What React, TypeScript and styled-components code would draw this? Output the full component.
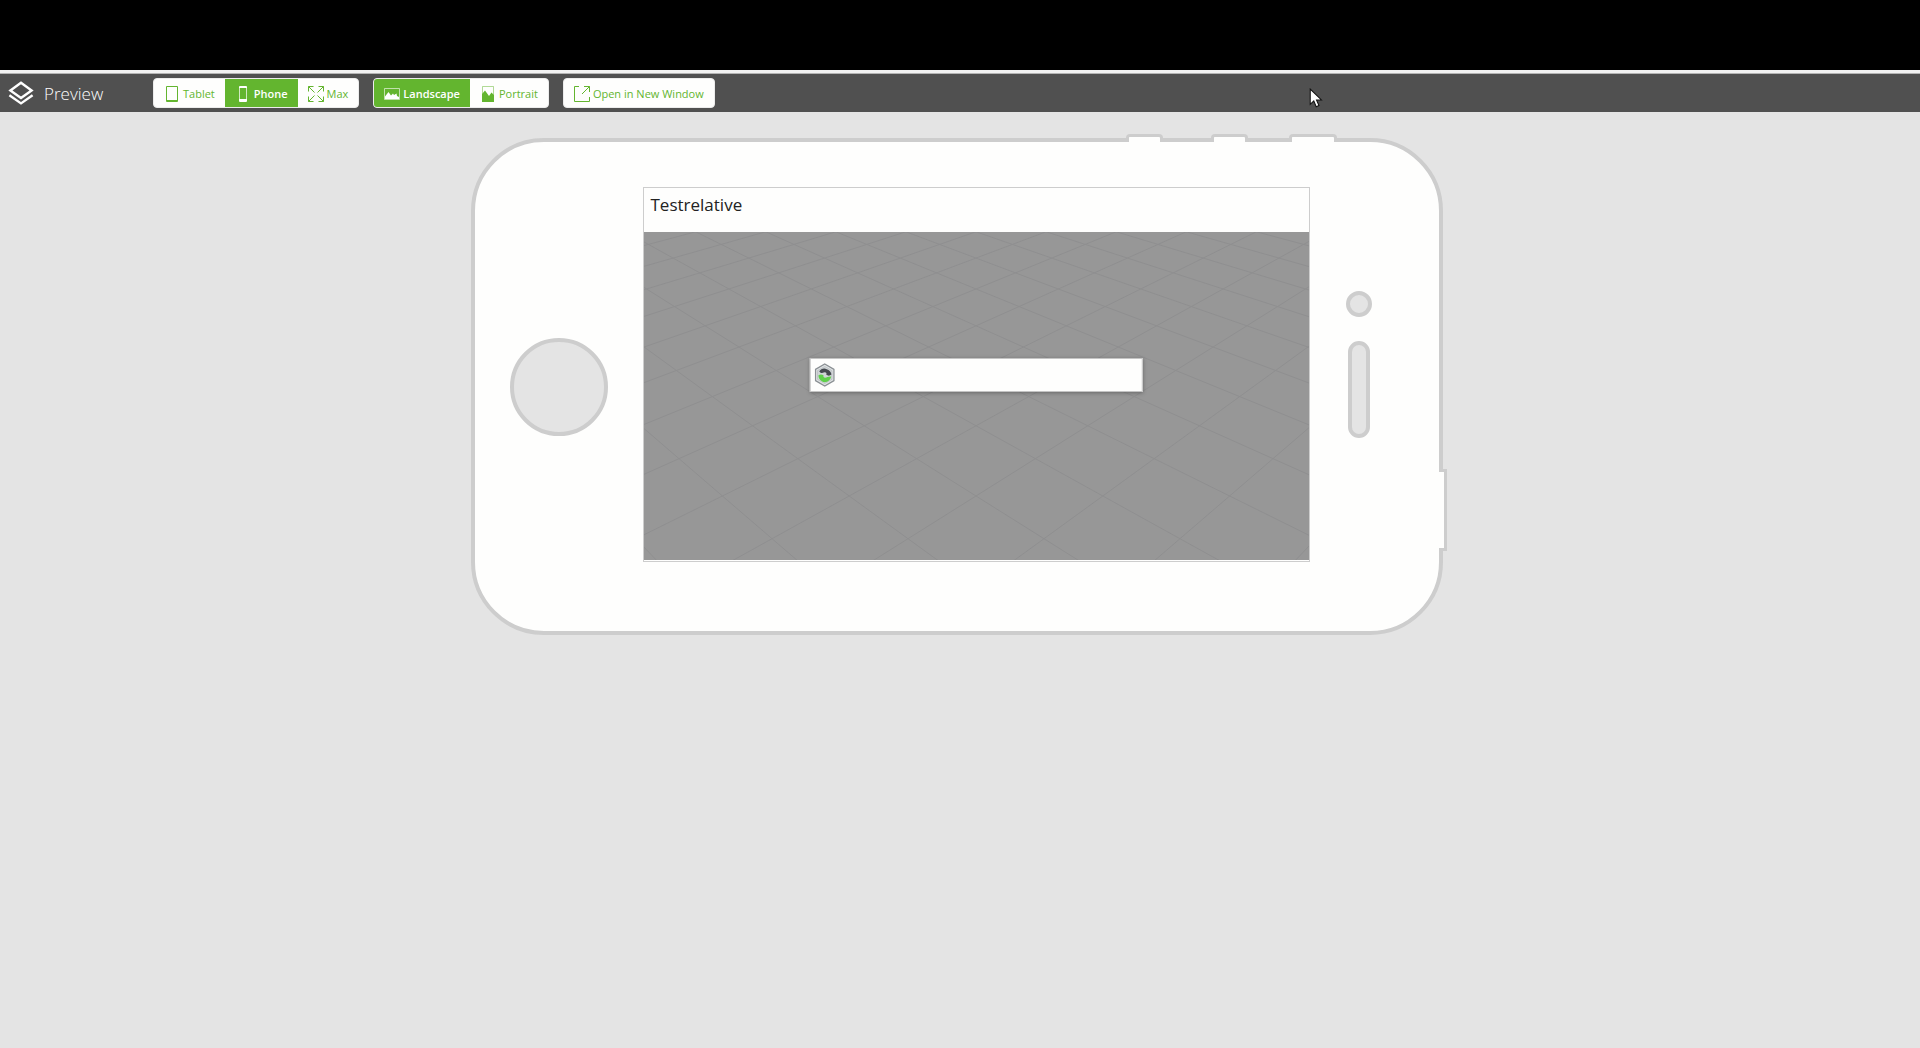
import React, { useState } from "react";
import styled, { createGlobalStyle, css } from "styled-components";

const GlobalStyle = createGlobalStyle`
  *, *::before, *::after { box-sizing: border-box; }
  body {
    margin: 0;
    background: #e4e4e4;
    font-family: "Open Sans", "Noto Sans", sans-serif;
  }
`;

const LINE = "#cdcdcd";
const GREEN = "#63b52f";
const PAPER = "#fefefd";

const Page = styled.div`
  display: flex;
  flex-direction: column;
  min-height: 100vh;
`;

const Letterbox = styled.div`
  height: 74px;
  background: #000;
  border-bottom: 4px solid #f2f2f2;
`;

const Toolbar = styled.header`
  position: relative;
  display: flex;
  align-items: center;
  gap: 14px;
  height: 38px;
  padding-left: 8px;
  background: #505050;
  box-shadow: 0 -1px 0 #b4b4b4;
`;

const Brand = styled.div`
  display: flex;
  align-items: center;
  gap: 10px;
  width: 131px;
  color: #fff;
`;

const Title = styled.h1`
  margin: 0;
  padding-top: 2px;
  font-size: 17px;
  line-height: 24px;
  font-weight: 300;
`;

const ButtonGroup = styled.div`
  display: flex;
  height: 30px;
  overflow: hidden;
  background: ${PAPER};
  border: 1px solid #ececec;
  border-radius: 4px;
`;

const ToolButton = styled.button<{ $active?: boolean }>`
  display: flex;
  align-items: center;
  gap: 3px;
  padding: 1px 10px 0;
  border: 0;
  background: transparent;
  color: ${GREEN};
  font-family: inherit;
  font-size: 11px;
  line-height: 16px;
  cursor: pointer;
  ${(p) =>
    p.$active &&
    css`
      background: ${GREEN};
      color: #fff;
      font-weight: 600;
    `}
`;

const Icon = styled.svg`
  display: block;
  flex: none;
`;

const Pointer = styled(Icon)`
  position: absolute;
  left: 1309px;
  top: 14px;
  pointer-events: none;
`;

const Stage = styled.main`
  flex: 1;
  display: flex;
  justify-content: center;
  align-items: flex-start;
  padding-top: 26px;
`;

const Device = styled.div`
  position: relative;
  display: grid;
  grid-template-columns: 98px 667px 28px;
  column-gap: 35px;
  align-items: start;
  margin-right: 7px;
  padding: 45px 66px 69px 35px;
  background: ${PAPER};
  border: 4px solid ${LINE};
  border-radius: 73px;
`;

const TopKey = styled.span<{ $x: number; $w: number }>`
  position: absolute;
  top: -8px;
  left: ${(p) => p.$x}px;
  width: ${(p) => p.$w}px;
  height: 8px;
  background: ${PAPER};
  border: 3px solid ${LINE};
  border-bottom: 0;
  border-radius: 4px 4px 0 0;
`;

const SideKey = styled.span`
  position: absolute;
  top: 327px;
  right: -8px;
  width: 8px;
  height: 82px;
  background: ${PAPER};
  border: 3px solid ${LINE};
  border-left: 0;
`;

const HomeKey = styled.div`
  height: 98px;
  margin-top: 151px;
  background: #e4e4e4;
  border: 4px solid ${LINE};
  border-radius: 50%;
`;

const Sensors = styled.div`
  display: flex;
  flex-direction: column;
  align-items: center;
  gap: 24px;
  margin-top: 104px;
`;

const Sensor = styled.span<{ $w: number; $h: number }>`
  width: ${(p) => p.$w}px;
  height: ${(p) => p.$h}px;
  background: #e4e4e4;
  border: 4px solid ${LINE};
  border-radius: 13px;
`;

const Screen = styled.section`
  position: relative;
  display: flex;
  flex-direction: column;
  height: 375px;
  padding-bottom: 1px;
  background: ${PAPER};
  border: 1px solid ${LINE};
`;

const AppTitle = styled.h2`
  flex: none;
  height: 44px;
  margin: 0;
  padding: 5px 7px;
  color: #222;
  font-size: 17px;
  line-height: 24px;
  font-weight: 400;
`;

const Floor = styled.svg`
  display: block;
  flex: 1;
  min-height: 0;
  width: 100%;
  background: #979797;
`;

const Loader = styled.div`
  position: absolute;
  top: 50%;
  left: 50%;
  transform: translate(-50%, -50%);
  display: flex;
  align-items: center;
  width: 50%;
  height: 34px;
  padding: 0 4px;
  background: ${PAPER};
  border: 1px solid #c4c4c4;
  box-shadow: 0 1px 4px rgba(0, 0, 0, 0.3);
`;

/* Perspective floor: rows sit at 1/(a - b*n), columns spread linearly from the horizon. */
const floorPoint = (m: number, n: number) => {
  const depth = 1 / (8.688e-4 - 3.806e-5 * n);
  return { x: 332 + 0.03578 * depth * m, y: depth / 3 - 326.7 };
};

const floorLines = Array.from({ length: 29 }, (_, i) => (i - 14) * 2).flatMap((c) =>
  [1, -1].map((dir) => ({
    key: `${c}:${dir}`,
    a: floorPoint(c - 6 * dir, -6),
    b: floorPoint(c + 12 * dir, 12),
  }))
);

const FloorGrid = () => (
  <Floor viewBox="0 0 665 328" preserveAspectRatio="none" aria-hidden="true">
    {floorLines.map(({ key, a, b }) => (
      <line key={key} x1={a.x} y1={a.y} x2={b.x} y2={b.y} stroke="#8f8f90" strokeWidth="1" />
    ))}
  </Floor>
);

const LayersIcon = () => (
  <Icon width="26" height="24" viewBox="0 0 26 24" fill="none" stroke="#fff" strokeWidth="2.4" aria-hidden="true">
    <path d="M13 1.800 23.600 9.400 13 17 2.400 9.400Z" />
    <path d="M1.400 14.200 13 22.400 24.600 14.200" />
  </Icon>
);

const TabletIcon = () => (
  <Icon width="16" height="16" viewBox="0 0 16 16" fill="none" stroke="currentColor" aria-hidden="true">
    <path d="M2.500.5h11v15h-11z" />
    <path d="M2 14.500h12" />
  </Icon>
);

const PhoneIcon = () => (
  <Icon width="16" height="16" viewBox="0 0 16 16" fill="currentColor" aria-hidden="true">
    <path d="M5 0h6a1 1 0 0 1 1 1v1H4V1a1 1 0 0 1 1-1ZM4 13h8v2a1 1 0 0 1-1 1H5a1 1 0 0 1-1-1Z" />
    <path d="M4 2h1v11H4ZM11 2h1v11h-1Z" opacity=".7" />
  </Icon>
);

const MaxIcon = () => (
  <Icon width="16" height="16" viewBox="0 0 16 16" fill="none" stroke="currentColor" aria-hidden="true">
    <path d="M.5 5.500V.5h5M10.500.5h5v5M15.500 10.500v5h-5M5.500 15.500h-5v-5" />
    <path d="M.5.5 6.500 6.500M15.500.5l-6 6M15.500 15.500l-6-6M.5 15.500l6-6" />
  </Icon>
);

const LandscapeIcon = () => (
  <Icon width="16" height="12" viewBox="0 0 16 12" aria-hidden="true">
    <path d="M.5.5h15v11H.5z" fill="none" stroke="currentColor" opacity=".6" />
    <path d="M1 11V8.500L4.500 4 7 7.500l2-2 1 1.500 2.500-1.500L13 8l2 1v2Z" fill="currentColor" />
  </Icon>
);

const PortraitIcon = () => (
  <Icon width="16" height="16" viewBox="0 0 16 16" aria-hidden="true">
    <path d="M2.500.5h11v15h-11z" fill="none" stroke="currentColor" opacity=".5" />
    <path d="M2 16V8l3-3.500L9 10l2.500-3.500L14 9v7Z" fill="currentColor" />
  </Icon>
);

const OpenIcon = () => (
  <Icon width="16" height="16" viewBox="0 0 16 16" fill="none" stroke="currentColor" aria-hidden="true">
    <path d="M5 .5H.5v15h15V11" />
    <path d="M10 .5h5.500V6M15.500.5 8 8" />
  </Icon>
);

const SpinnerLogo = () => (
  <Icon width="20" height="24" viewBox="1 0 20 24" aria-hidden="true">
    <path d="M11 1 20.300 6.300v11.400L11 23 1.700 17.700V6.300Z" fill="#e2e5e6" stroke="#8b9094" strokeWidth="1.400" />
    <path d="M11 3.400 18.300 7.600v8.800L11 20.600 3.700 16.400V7.600Z" fill="#cfd4d6" stroke="#b0b5b8" strokeWidth=".6" />
    <path d="M5.500 8.500C7 5.600 10.500 4.800 13 6.200c2.500 1 4.500 2.600 4.700 5.400-1.600 1.400-3.700 1.300-5.200.2.800-1.300 0-2.500-1.500-2.600-1.700 0-2.300 1.100-3.800.9Z" fill="#45494f" />
    <path d="M4.700 12.300c1.800-1.400 4-1 5.200.2-.7 1.200.2 2.300 1.500 2.300 1.800 0 2.800-1.400 6-1.200-.6 3.200-3.200 5.600-6.400 5.600-3.500-.4-6.300-3-6.300-6.900Z" fill="#5fd04a" />
  </Icon>
);

const sizes = [
  { id: "Tablet", icon: <TabletIcon /> },
  { id: "Phone", icon: <PhoneIcon /> },
  { id: "Max", icon: <MaxIcon /> },
];

const orientations = [
  { id: "Landscape", icon: <LandscapeIcon /> },
  { id: "Portrait", icon: <PortraitIcon /> },
];

type ToggleProps = {
  label: string;
  items: { id: string; icon: React.ReactNode }[];
  value: string;
  onChange: (id: string) => void;
};

const Toggle = ({ label, items, value, onChange }: ToggleProps) => (
  <ButtonGroup role="group" aria-label={label}>
    {items.map(({ id, icon }) => (
      <ToolButton
        key={id}
        type="button"
        $active={id === value}
        aria-pressed={id === value}
        onClick={() => onChange(id)}
      >
        {icon}
        {id}
      </ToolButton>
    ))}
  </ButtonGroup>
);

export default function App() {
  const [size, setSize] = useState("Phone");
  const [orientation, setOrientation] = useState("Landscape");

  return (
    <Page>
      <GlobalStyle />
      <Letterbox />
      <Toolbar>
        <Brand>
          <LayersIcon />
          <Title>Preview</Title>
        </Brand>
        <Toggle label="Device" items={sizes} value={size} onChange={setSize} />
        <Toggle label="Orientation" items={orientations} value={orientation} onChange={setOrientation} />
        <ButtonGroup>
          <ToolButton type="button">
            <OpenIcon />
            Open in New Window
          </ToolButton>
        </ButtonGroup>
        <Pointer width="14" height="21" viewBox="0 0 13 20" aria-hidden="true">
          <path d="M1 1v14.600l3.400-3.200 2.300 5.400 2.600-1.100-2.300-5.300h4.700Z" fill="#fff" stroke="#111" />
        </Pointer>
      </Toolbar>
      <Stage>
        <Device>
          <TopKey $x={651} $w={37} />
          <TopKey $x={736} $w={37} />
          <TopKey $x={814} $w={48} />
          <SideKey />
          <HomeKey />
          <Screen>
            <AppTitle>Testrelative</AppTitle>
            <FloorGrid />
            <Loader role="status" aria-label="Loading">
              <SpinnerLogo />
            </Loader>
          </Screen>
          <Sensors>
            <Sensor $w={26} $h={26} />
            <Sensor $w={22} $h={97} />
          </Sensors>
        </Device>
      </Stage>
    </Page>
  );
}
